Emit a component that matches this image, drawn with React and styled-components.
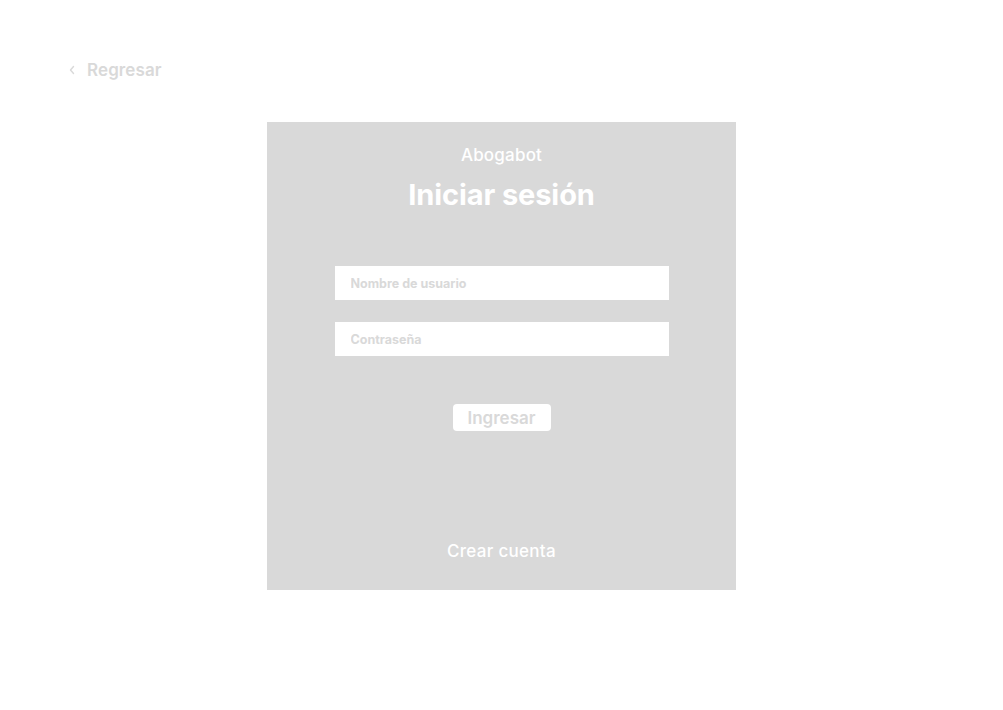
import React from 'react';
import styled, { createGlobalStyle } from 'styled-components';

const GlobalStyle = createGlobalStyle`
    body {
        margin: 0;
        background: #ffffff;
        font-family: Inter, "Noto Sans", sans-serif;
    }
`;

const Page = styled.div`
    width: 1003px;
    min-height: 710px;
    padding-top: 60px;
    box-sizing: border-box;
`;

const BackLink = styled.a`
    display: flex;
    align-items: center;
    gap: 11px;
    margin-left: 68px;
    height: 20px;
    color: #d9d9d9;
    font-size: 17px;
    font-weight: 600;
    letter-spacing: 0.1px;
    text-decoration: none;
    cursor: pointer;
`;

const Card = styled.div`
    width: 469px;
    height: 468px;
    margin: 42px auto 0 auto;
    background-color: #d9d9d9;
    display: flex;
    flex-direction: column;
    align-items: center;
    padding: 23px 0 29px 0;
    box-sizing: border-box;
`;

const Brand = styled.div`
    color: #ffffff;
    font-size: 17px;
    font-weight: 500;
    line-height: 20px;
    letter-spacing: 0.2px;
`;

const Title = styled.h1`
    margin: 13px 0 0 0;
    color: #ffffff;
    font-size: 29px;
    font-weight: 700;
    line-height: 34px;
    letter-spacing: -0.1px;
`;

const Form = styled.form`
    display: flex;
    flex-direction: column;
    align-items: center;
    gap: 22px;
    margin-top: 54px;
    flex: 1;
`;

const Input = styled.input`
    width: 334px;
    height: 34px;
    box-sizing: border-box;
    border: none;
    outline: none;
    background-color: #ffffff;
    padding: 0 16px;
    font-family: Inter, "Noto Sans", sans-serif;
    font-size: 12.5px;
    font-weight: 700;
    color: #555;

    &::placeholder {
        color: #d9d9d9;
    }
`;

const SubmitButton = styled.button`
    margin-top: 26px;
    width: 98px;
    height: 27px;
    border: none;
    border-radius: 4px;
    background-color: #ffffff;
    color: #d9d9d9;
    font-family: Inter, "Noto Sans", sans-serif;
    font-size: 17px;
    font-weight: 600;
    padding: 0;
    cursor: pointer;
`;

const CreateLink = styled.a`
    margin-top: auto;
    color: #ffffff;
    font-size: 17px;
    font-weight: 500;
    line-height: 20px;
    letter-spacing: 0.3px;
    text-decoration: none;
    cursor: pointer;
`;

const Chevron = () => (
    <svg width="8" height="10" viewBox="0 0 8 10" fill="none">
        <path d="M5.5 1.5L2.5 5l3 3.5" stroke="#d9d9d9" strokeWidth="1.4" strokeLinecap="round" strokeLinejoin="round" />
    </svg>
);

const App = () => {
    return (
        <Page>
            <GlobalStyle />
            <BackLink>
                <Chevron />
                Regresar
            </BackLink>
            <Card>
                <Brand>Abogabot</Brand>
                <Title>Iniciar sesión</Title>
                <Form onSubmit={(e) => e.preventDefault()}>
                    <Input name="username" type="text" placeholder="Nombre de usuario" />
                    <Input name="password" type="password" placeholder="Contraseña" />
                    <SubmitButton type="submit">Ingresar</SubmitButton>
                </Form>
                <CreateLink>Crear cuenta</CreateLink>
            </Card>
        </Page>
    );
};

export default App;
